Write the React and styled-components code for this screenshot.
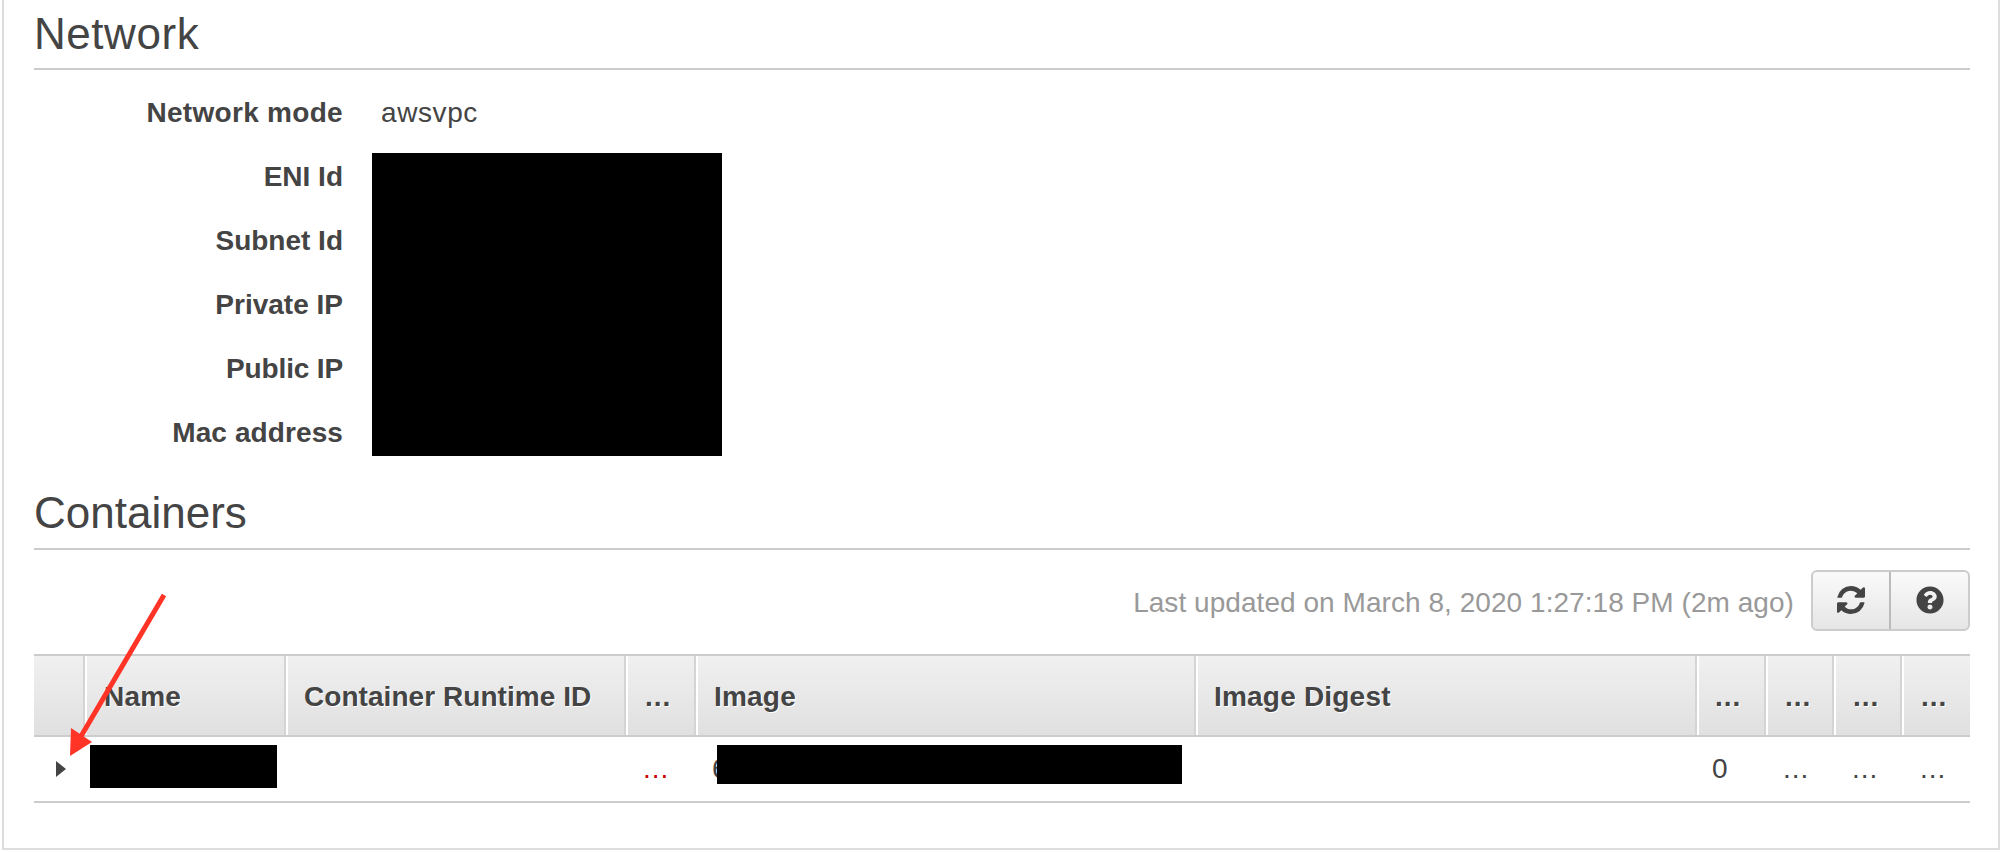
import React from "react";
import styled, { createGlobalStyle } from "styled-components";
import { FaQuestionCircle } from "react-icons/fa";

const Global = createGlobalStyle`
  html, body { margin: 0; padding: 0; background: #fff; }
  body { font-family: "Liberation Sans", Arial, sans-serif; color: #444; overflow: hidden; font-kerning: none; }
`;

const COLS = "51px 201px 340px 70px 500px 501px 69px 68px 68px 68px";

const Page = styled.div`
  padding: 0 2px;
  height: 852px;
  box-sizing: border-box;
`;
const Panel = styled.section`
  position: relative;
  box-sizing: border-box;
  height: 850px;
  border: 2px solid #ddd;
  border-top: 0;
  padding: 0 28px 0 30px;
`;
const Heading = styled.h2`
  display: flex;
  align-items: flex-end;
  box-sizing: border-box;
  height: ${(p) => p.$height}px;
  margin: 0;
  padding-bottom: ${(p) => p.$pad}px;
  border-bottom: 2px solid #ccc;
  font-size: 44px;
  line-height: 50px;
  font-weight: 400;
  letter-spacing: ${(p) => p.$track ?? 0}px;
  color: #444;
`;
const Details = styled.div`
  display: grid;
  grid-template-columns: 309px 1fr;
  grid-auto-rows: 64px;
  margin-top: 11px;
  font-size: 28px;
`;
const Label = styled.div`
  display: flex;
  align-items: center;
  justify-content: flex-end;
  font-weight: 700;
  letter-spacing: ${(p) => p.$track ?? 0}px;
  color: #444;
`;
const Value = styled.div`
  display: flex;
  align-items: center;
  padding-left: 38px;
  letter-spacing: 0.6px;
`;
const DetailRedaction = styled.div`
  grid-column: 2;
  grid-row: 2 / span 5;
  width: 350px;
  margin: 8px 0 9px 29px;
  background: #000;
`;
const Toolbar = styled.div`
  display: flex;
  justify-content: flex-end;
  align-items: center;
  height: 104px;
  padding-bottom: 3px;
  box-sizing: border-box;
  gap: 17px;
`;
const Updated = styled.span`
  margin-top: 4px;
  font-size: 28px;
  letter-spacing: 0.05px;
  color: #999;
`;
const ButtonGroup = styled.div`
  display: flex;
  height: 61px;
  box-sizing: border-box;
  border: 2px solid #ccc;
  border-radius: 6px;
  background: linear-gradient(#fafafa, #e6e6e6);
  overflow: hidden;
`;
const IconButton = styled.button`
  display: flex;
  align-items: center;
  justify-content: center;
  width: ${(p) => p.$width}px;
  padding: 0 0 2px;
  border: 0;
  border-left: ${(p) => (p.$divider ? "2px solid #bbb" : "0")};
  background: transparent;
  color: #444;
  font-size: 28px;
`;
const HeaderRow = styled.div`
  display: grid;
  grid-template-columns: ${COLS};
  height: 83px;
  box-sizing: border-box;
  border-top: 2px solid #ccc;
  border-bottom: 2px solid #ccc;
  background: linear-gradient(#f0f0f0, #e0e0e0);
`;
const HeaderCell = styled.div`
  display: flex;
  align-items: center;
  box-sizing: border-box;
  padding-left: ${(p) => p.$pad ?? 18}px;
  padding-top: 2px;
  border-left: ${(p) => (p.$first ? "0" : "2px solid #fff")};
  box-shadow: ${(p) => (p.$first ? "none" : "-2px 0 0 0 #d4d4d4")};
  font-size: 28px;
  font-weight: 700;
  letter-spacing: ${(p) => p.$track}px;
  color: #444;
  text-shadow: 1px 1px 0 #fff;
`;
const BodyRow = styled.div`
  display: grid;
  grid-template-columns: ${COLS};
  height: 66px;
  box-sizing: border-box;
  border-bottom: 2px solid #ccc;
  font-size: 28px;
`;
const Cell = styled.div`
  position: relative;
  display: flex;
  align-items: center;
  padding-left: ${(p) => p.$pad ?? 18}px;
  letter-spacing: ${(p) => (p.$dots ? "1px" : "0")};
  color: ${(p) => p.$color ?? "#444"};
`;
const Caret = styled.span`
  width: 0;
  height: 0;
  border-left: 10px solid #444;
  border-top: 8px solid transparent;
  border-bottom: 8px solid transparent;
`;
const NameRedaction = styled.div`
  align-self: flex-start;
  width: 187px;
  height: 43px;
  margin: 8px 0 0 5px;
  background: #000;
`;
const ImageRedaction = styled.div`
  position: absolute;
  left: 21px;
  top: 8px;
  width: 465px;
  height: 39px;
  background: #000;
`;
const Arrow = styled.svg`
  position: absolute;
  left: 56px;
  top: 590px;
  pointer-events: none;
`;

const headers = [
  { text: "", pad: 0, first: true, track: 0 },
  { text: "Name", pad: 17, track: 0.2 },
  { text: "Container Runtime ID", pad: 16, track: 0.05 },
  { text: "...", pad: 17, track: 1 },
  { text: "Image", pad: 16, track: 0.2 },
  { text: "Image Digest", pad: 16, track: 0.2 },
  { text: "...", pad: 16, track: 1 },
  { text: "...", pad: 17, track: 1 },
  { text: "...", pad: 17, track: 1 },
  { text: "...", pad: 17, track: 1 },
];

const RefreshIcon = () => (
  <svg width="28" height="28" viewBox="0 0 1536 1536" fill="currentColor">
    <path d="M1511 928q0 5-1 7-64 268-268 434.5t-478 166.5q-146 0-282.5-55t-243.5-157l-129 129q-19 19-45 19t-45-19-19-45v-448q0-26 19-45t45-19h448q26 0 45 19t19 45-19 45l-137 137q71 66 161 102t187 36q134 0 250-65t186-179q11-17 53-117 8-23 30-23h192q13 0 22.5 9.5t9.5 22.5zm25-800v448q0 26-19 45t-45 19h-448q-26 0-45-19t-19-45 19-45l138-138q-148-137-349-137-134 0-250 65t-186 179q-11 17-53 117-8 23-30 23h-199q-13 0-22.5-9.5t-9.5-22.5v-7q65-268 270-434.5t480-166.5q146 0 284 55.5t245 156.5l130-129q19-19 45-19t45 19 19 45z" />
  </svg>
);

export default function App() {
  return (
    <Page>
      <Global />
      <Panel>
        <Heading $height={70} $pad={9} $track={0.55}>Network</Heading>
        <Details>
          <Label $track={0.3}>Network mode</Label>
          <Value>awsvpc</Value>
          <Label>ENI Id</Label>
          <DetailRedaction />
          <Label>Subnet Id</Label>
          <Label>Private IP</Label>
          <Label $track={-0.15}>Public IP</Label>
          <Label $track={0.1}>Mac address</Label>
        </Details>
        <Heading $height={85} $pad={10}>Containers</Heading>
        <Toolbar>
          <Updated>Last updated on March 8, 2020 1:27:18 PM (2m ago)</Updated>
          <ButtonGroup>
            <IconButton $width={76}><RefreshIcon /></IconButton>
            <IconButton $width={79} $divider><FaQuestionCircle /></IconButton>
          </ButtonGroup>
        </Toolbar>
        <HeaderRow>
          {headers.map((h, i) => (
            <HeaderCell key={i} $pad={h.pad} $first={h.first} $track={h.track}>{h.text}</HeaderCell>
          ))}
        </HeaderRow>
        <BodyRow>
          <Cell $pad={22}><Caret /></Cell>
          <Cell $pad={0}><NameRedaction /></Cell>
          <Cell />
          <Cell $pad={17} $color="#c00" $dots>...</Cell>
          <Cell $pad={16}>6<ImageRedaction /></Cell>
          <Cell />
          <Cell $pad={15}>0</Cell>
          <Cell $pad={17} $dots>...</Cell>
          <Cell $pad={18} $dots>...</Cell>
          <Cell $pad={18} $dots>...</Cell>
        </BodyRow>
        <Arrow width="110" height="175" viewBox="0 0 110 175">
          <line x1="104" y1="5" x2="20" y2="148" stroke="#ff3326" strokeWidth="5" />
          <polygon points="10,166 11,138 32,152" fill="#ff3326" />
        </Arrow>
      </Panel>
    </Page>
  );
}
